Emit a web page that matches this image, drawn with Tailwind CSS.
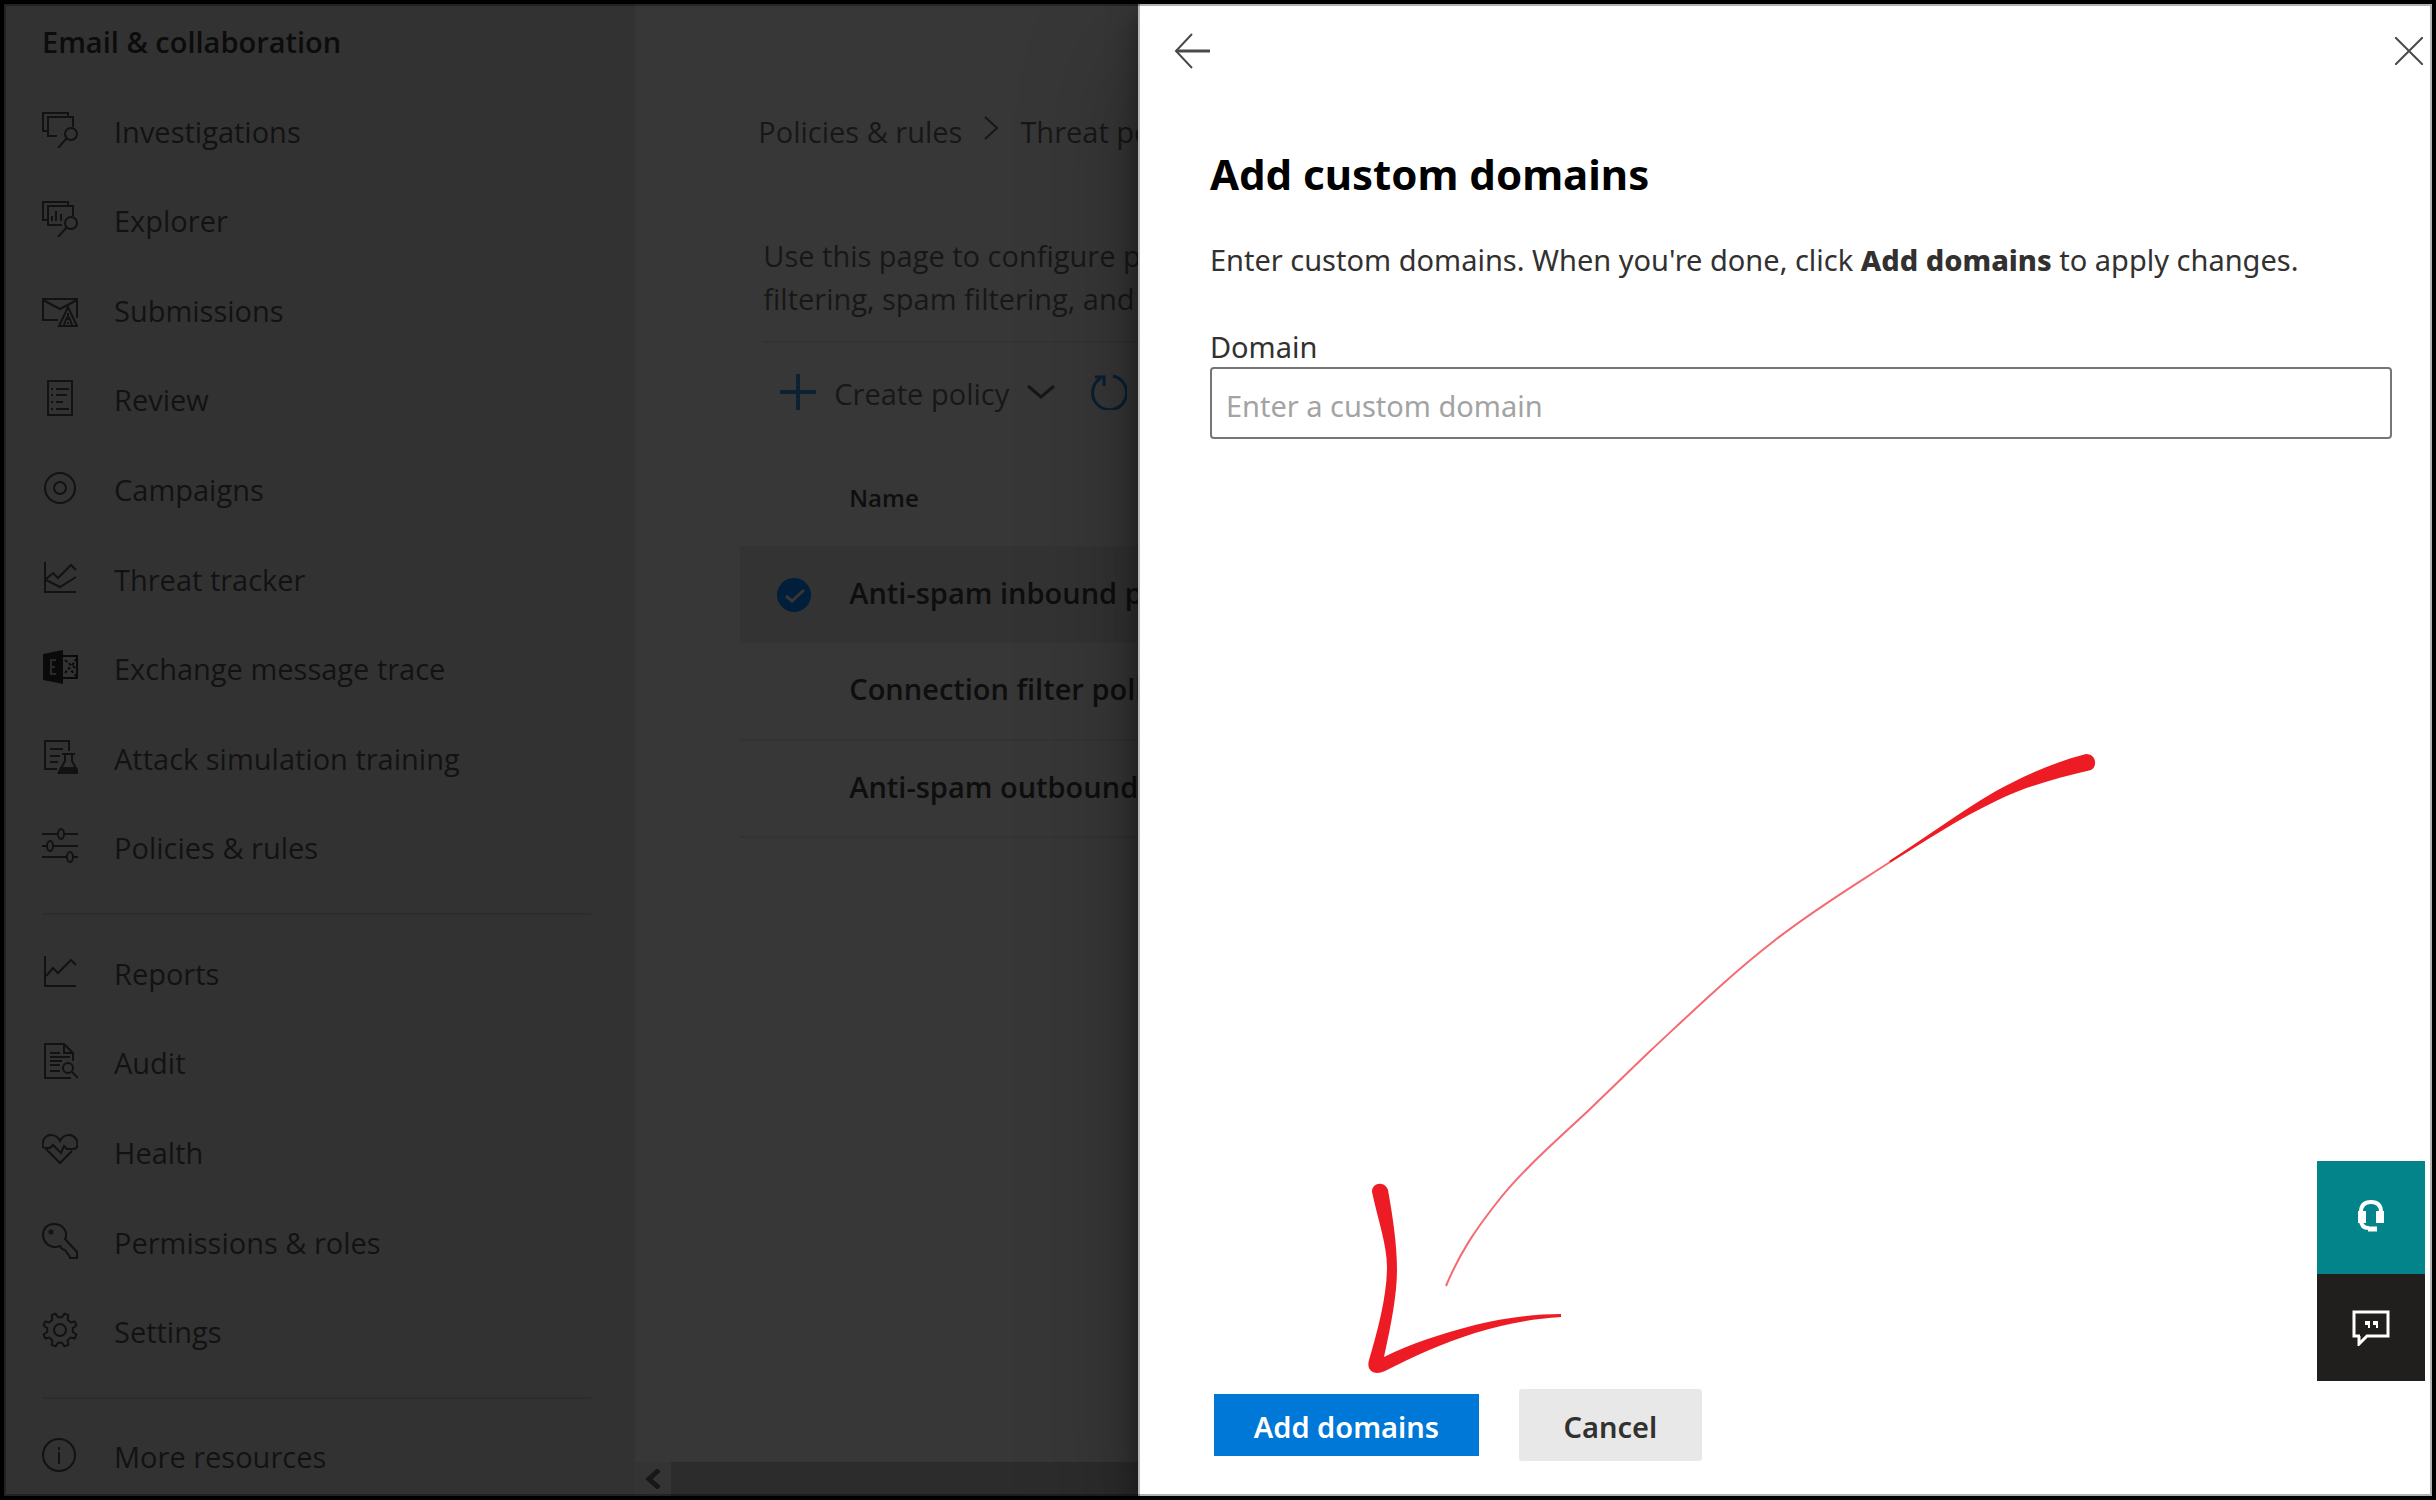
<!DOCTYPE html>
<html lang="en">
<head>
<meta charset="utf-8">
<title>Add custom domains</title>
<script src="https://cdn.jsdelivr.net/npm/@tailwindcss/browser@4"></script>
</head>
<body class="h-screen overflow-hidden bg-black p-1 font-['Open_Sans',sans-serif] text-[29px] leading-[40px]">
<div class="relative flex h-full overflow-hidden">

  <!-- Sidebar -->
  <nav aria-label="Main" class="flex w-[26%] shrink-0 flex-col overflow-hidden bg-[#323232] text-[#121212]">
    <h2 class="flex h-[76px] shrink-0 items-center pl-[38px] font-semibold text-[#0c0c0c]">Email &amp; collaboration</h2>
    <ul class="mt-[7px] grid h-[806px] shrink-0 auto-rows-fr pl-[38px]">
      <li class="flex"><a href="#" class="flex items-center gap-9">
        <svg class="mb-1 size-9" viewBox="0 0 36 36" fill="none" stroke="currentColor" stroke-width="2"><path d="M5 19H1V1h25v4M15 24H6V5h25v10M25 26l-9 10"/><circle cx="29" cy="22" r="6"/></svg>
        Investigations</a></li>
      <li class="flex"><a href="#" class="flex items-center gap-9">
        <svg class="mb-1 size-9" viewBox="0 0 36 36" fill="none" stroke="currentColor" stroke-width="2"><path d="M5 19H1V1h25v4M20 24H6V5h25v10M25 26l-9 10M10 20v-5M14 20V10M19 20v-7"/><circle cx="29" cy="22" r="6"/></svg>
        Explorer</a></li>
      <li class="flex"><a href="#" class="flex items-center gap-9">
        <svg class="mb-1 size-9" viewBox="0 0 36 36" fill="none" stroke="currentColor" stroke-width="2"><path d="M16 29H1V8h34v19M1 9l17 9 17-9M17 35l9-19 9 19zM26 22v7M26 31v2M22 34l3-8M30 34l-3-8"/></svg>
        Submissions</a></li>
      <li class="flex"><a href="#" class="flex items-center gap-9">
        <svg class="mb-1 size-9" viewBox="0 0 36 36" fill="none" stroke="currentColor" stroke-width="2"><path d="M6 1h24v34H6zM9 9h2M14 9h13M9 15h2M14 15h11M9 22h2M14 22h7M9 29h2M14 29h13"/></svg>
        Review</a></li>
      <li class="flex"><a href="#" class="flex items-center gap-9">
        <svg class="mb-1 size-9" viewBox="0 0 36 36" fill="none" stroke="currentColor" stroke-width="2"><circle cx="18" cy="18" r="15"/><circle cx="18" cy="18" r="6"/></svg>
        Campaigns</a></li>
      <li class="flex"><a href="#" class="flex items-center gap-9">
        <svg class="mb-1 size-9" viewBox="0 0 36 36" fill="none" stroke="currentColor" stroke-width="2"><path d="M3 2v30h31M4 19l7-6 5 5L29 5l5 5M4 20l14 7 16-10"/></svg>
        Threat tracker</a></li>
      <li class="flex"><a href="#" class="flex items-center gap-9">
        <svg class="mb-1 size-9 text-[#0a0a0a]" viewBox="0 0 36 36" fill="none" stroke="currentColor" stroke-width="2"><path fill="currentColor" stroke="none" d="M1 5l20-4v34L1 31z"/><path d="M21 7h14v22H21"/><path stroke-dasharray="3 2" d="M23 11l7 6 4-7M23 24l4-5 7 8M31 17l3 3"/><path stroke="#2a2a2a" d="M14 11H9v14h5M9 18h4"/></svg>
        Exchange message trace</a></li>
      <li class="flex"><a href="#" class="flex items-center gap-9">
        <svg class="mb-1 size-9" viewBox="0 0 36 36" fill="none" stroke="currentColor" stroke-width="2"><path d="M15 30H3V2h24v10M8 10h13M8 17h10M8 23h8M20 15h13M23 15v7l-6 11h19l-6-11v-7"/><path fill="currentColor" d="M19 29h15l2 5H17z"/></svg>
        Attack simulation training</a></li>
      <li class="flex"><a href="#" class="flex items-center gap-9">
        <svg class="mb-1 size-9" viewBox="0 0 36 36" fill="none" stroke="currentColor" stroke-width="2"><path d="M0 6h16M22 6h14M0 18h5M11 18h25M0 29h25M31 29h5"/><ellipse cx="19" cy="6" rx="3" ry="5"/><ellipse cx="8" cy="18" rx="3" ry="5"/><ellipse cx="28" cy="29" rx="3" ry="5"/></svg>
        Policies &amp; rules</a></li>
    </ul>
    <hr class="mr-[44px] ml-[38px] mt-5 shrink-0 border-t-2 border-[#2c2c2b]">
    <ul class="mt-[14px] grid h-[448px] shrink-0 auto-rows-fr pl-[38px]">
      <li class="flex"><a href="#" class="flex items-center gap-9">
        <svg class="mb-1 size-9" viewBox="0 0 36 36" fill="none" stroke="currentColor" stroke-width="2"><path d="M3 2v30h31M4 22l7-8 5 5L29 6l5 5"/></svg>
        Reports</a></li>
      <li class="flex"><a href="#" class="flex items-center gap-9">
        <svg class="mb-1 size-9" viewBox="0 0 36 36" fill="none" stroke="currentColor" stroke-width="2"><path d="M29 35H3V1h19l9 9v8M22 1v9h9M8 10h10M8 14h20M8 18h12M8 22h10M8 28h10M30 29l6 6"/><circle cx="26" cy="25" r="5"/></svg>
        Audit</a></li>
      <li class="flex"><a href="#" class="flex items-center gap-9">
        <svg class="mb-1 size-9" viewBox="0 0 36 36" fill="none" stroke="currentColor" stroke-width="2"><path d="M1 15C-1 7 4 2 9 2c4 0 7 2 9 6 2-4 5-6 9-6 5 0 10 5 8 12-1 2-3 2-4 2h-6l-3-3-3 7-8-8-3 3H3l15 15 12-12"/></svg>
        Health</a></li>
      <li class="flex"><a href="#" class="flex items-center gap-9">
        <svg class="mb-1 size-9" viewBox="0 0 36 36" fill="none" stroke="currentColor" stroke-width="2"><path d="M24 14C25 7 20 1 12 1 5 1 1 6 1 12s5 12 12 12c2 0 3 0 5-1l2 3 3 1 5 7v1h7v-6L23 16z"/><circle cx="9" cy="9" r="1.500"/></svg>
        Permissions &amp; roles</a></li>
      <li class="flex"><a href="#" class="flex items-center gap-9">
        <svg class="mb-1 size-9" viewBox="0 0 36 36" fill="none" stroke="currentColor" stroke-width="2" stroke-linejoin="round"><path d="M20 5.200 22.500 1.600 26.400 3.200 25.600 7.500 28.500 10.400 32.800 9.600 34.400 13.500 30.800 16V20L34.400 22.500 32.800 26.400 28.500 25.600 25.600 28.500 26.400 32.800 22.500 34.400 20 30.800H16L13.500 34.400 9.600 32.800 10.400 28.500 7.500 25.600 3.200 26.400 1.600 22.500 5.200 20V16L1.600 13.500 3.200 9.600 7.500 10.400 10.400 7.500 9.600 3.200 13.500 1.600 16 5.200z"/><circle cx="18" cy="18" r="6"/></svg>
        Settings</a></li>
    </ul>
    <hr class="mr-[44px] ml-[38px] mt-5 shrink-0 border-t-2 border-[#2c2c2b]">
    <a href="#" class="mt-[14px] flex h-[88px] shrink-0 items-center gap-9 pl-[38px]">
      <svg class="mb-1 size-9" viewBox="0 0 36 36" fill="none" stroke="currentColor" stroke-width="2"><circle cx="17" cy="18" r="16"/><path d="M17 10v3M17 15v12"/></svg>
      More resources</a>
  </nav>

  <!-- Policy list -->
  <main class="flex min-w-0 flex-1 flex-col overflow-hidden bg-[#373737] pt-[108px] whitespace-nowrap text-[#171717]">
    <div class="flex items-center pl-[123px]">
      <a href="#">Policies &amp; rules</a>
      <svg class="mx-[22px] mb-2 h-6 w-[14px] shrink-0" viewBox="0 0 14 24" fill="none" stroke="currentColor" stroke-width="2"><path d="M1 1l12 11L1 23"/></svg>
      <a href="#">Threat policies</a>
    </div>
    <p class="mt-[82px] pl-[128px] leading-[43px]">Use this page to configure policies<br>filtering, spam filtering, and</p>
    <div class="ml-[128px] mt-[21px] flex h-[104px] items-center border-t-2 border-[#333] pl-[17px]">
      <button class="flex items-center gap-[18px]">
        <svg class="mb-1 size-9 text-[#0c2232]" viewBox="0 0 36 36" stroke="currentColor" stroke-width="4"><path d="M18 0v36M0 18h36"/></svg>
        Create policy
        <svg class="mb-1 h-4 w-7" viewBox="0 0 28 16" fill="none" stroke="currentColor" stroke-width="3"><path d="M1 2l13 11L27 2"/></svg>
      </button>
      <button aria-label="Refresh" class="ml-9">
        <svg class="mb-1 size-9 text-[#0a1f30]" viewBox="0 0 36 36" fill="none" stroke="currentColor" stroke-width="3"><path d="M22 2a17 17 0 1 1-12 2M4 3h9v9"/></svg>
      </button>
    </div>
    <table class="ml-[105px] w-[calc(100%-105px)] table-fixed border-collapse text-left font-semibold text-[#0e0e0e]">
      <colgroup><col class="w-[109px]"><col></colgroup>
      <thead>
        <tr class="h-[101px] text-2xl"><th></th><th class="pt-1 font-semibold">Name</th></tr>
      </thead>
      <tbody>
        <tr class="h-[97px] bg-[#333]">
          <td class="pl-9"><svg class="size-9" viewBox="0 0 36 36" fill="none"><circle cx="18" cy="18" r="17" fill="#011f3a"/><path d="M10 19l6 5L28 13" stroke="#373737" stroke-width="3"/></svg></td>
          <td class="pb-1">Anti-spam inbound policy</td>
        </tr>
        <tr class="h-[97px] border-b-2 border-[#333]"><td></td><td class="pb-1">Connection filter policy</td></tr>
        <tr class="h-[97px] border-b-2 border-[#333]"><td></td><td class="pb-1">Anti-spam outbound policy</td></tr>
      </tbody>
    </table>
    <div class="mt-auto flex h-[34px] shrink-0">
      <button aria-label="Scroll left" class="flex w-9 items-center justify-center bg-[#343434]">
        <svg class="h-5 w-4" viewBox="0 0 16 20" fill="none" stroke="currentColor" stroke-width="5"><path d="M14 1L4 10l10 9"/></svg>
      </button>
      <div class="flex-1 bg-[#2c2c2c]"></div>
    </div>
  </main>

  <!-- Drawer -->
  <section role="dialog" aria-labelledby="title" class="relative flex w-[53.300%] shrink-0 flex-col border-l-2 border-[#b8b8b8] bg-white font-['Noto_Sans',sans-serif] text-[#323130] shadow-[0_50px_110px_rgba(0,0,0,0.3),0_10px_28px_rgba(0,0,0,0.4)]">
    <header class="flex h-[94px] items-center justify-between pl-[34px] pr-[9px]">
      <button aria-label="Back"><svg class="size-9" viewBox="0 0 36 36" fill="none" stroke="#4a4a4a" stroke-width="2"><path stroke-width="3" d="M2 18h34"/><path d="M18 1L2 18l16 17"/></svg></button>
      <button aria-label="Close"><svg class="size-7" viewBox="0 0 28 28" fill="none" stroke="#4a4a4a" stroke-width="2"><path d="M0 0l28 28M28 0L0 28"/></svg></button>
    </header>
    <div class="flex-1 pl-[70px] pr-10">
      <h1 id="title" class="mt-12 text-[42px] leading-[56px] font-bold text-black">Add custom domains</h1>
      <p class="mt-[38px]">Enter custom domains. When you're done, click <strong class="font-extrabold">Add domains</strong> to apply changes.</p>
      <label for="domain" class="mt-[47px] block">Domain</label>
      <input id="domain" type="text" placeholder="Enter a custom domain" class="block h-[72px] w-full rounded-[4px] border-2 border-[#767676] bg-white px-[14px] pt-1 placeholder:text-[#a3a3a3]">
    </div>
    <footer class="flex h-[142px] items-center gap-10 pl-[74px]">
      <button class="h-[62px] w-[265px] bg-[#0078d7] pt-1 font-semibold text-white">Add domains</button>
      <button class="h-[72px] w-[183px] rounded-[3px] bg-[#e8e8e8] pt-1 font-semibold">Cancel</button>
    </footer>

    <!-- Hand-drawn arrow -->
    <svg class="pointer-events-none absolute left-[220px] top-[740px] h-[636px] w-[740px]" viewBox="1360 744 740 636" fill="#ed1c24" aria-hidden="true">
      <path d="M2086 754C2055 762 2025 775 1996 791 1960 812 1925 838 1889 861L1890 863C1925 841 1960 818 1996 801 2027 786 2057 778 2091 770 2098 766 2096 754 2086 754z"/>
      <path d="M1890 862C1850 888 1812 911 1774 941 1730 975 1690 1014 1648 1053L1589 1110C1555 1142 1520 1172 1495 1205 1477 1228 1460 1252 1446 1286" fill="none" stroke="#f56a70" stroke-width="2"/>
      <path d="M1372 1192C1378 1220 1387 1245 1387 1267 1387 1295 1378 1330 1369 1360 1366 1371 1374 1376 1385 1371 1415 1356 1440 1344 1475 1333 1505 1324 1530 1319 1561 1317V1314C1530 1314 1500 1319 1475 1325 1440 1334 1410 1344 1384 1357 1391 1325 1397 1295 1397 1270 1397 1245 1393 1218 1388 1190 1385 1181 1372 1182 1372 1192z"/>
    </svg>

    <!-- Help and feedback -->
    <div class="absolute right-[7px] bottom-[115px] w-[108px]">
      <button aria-label="Need help?" class="flex h-[113px] w-full items-center justify-center bg-[#03838a]">
        <svg class="mb-1 h-8 w-7" viewBox="0 0 28 32" fill="none" stroke="#fff"><path stroke-width="4" d="M4 12C4 5 8 2 14 2s10 3 10 10"/><path stroke-width="8" d="M5 11v12M23 11v12"/><path stroke-width="4" d="M4 20c0 6 3 8 8 8"/><path stroke-width="5" d="M11 29h9"/></svg>
      </button>
      <button aria-label="Give feedback" class="flex h-[107px] w-full items-center justify-center bg-[#201f1e]">
        <svg class="h-9 w-[38px]" viewBox="0 0 38 36" fill="none" stroke="#fff" stroke-width="3"><path d="M8 26H2V2h34v24H15l-8 8v-8"/><path fill="#fff" stroke="none" d="M13 11h5v7h-2v-3h-3zM21 11h5v7h-2v-3h-3z"/></svg>
      </button>
    </div>
  </section>

  <div class="pointer-events-none absolute inset-0 border-2 border-black/30"></div>
</div>
</body>
</html>
